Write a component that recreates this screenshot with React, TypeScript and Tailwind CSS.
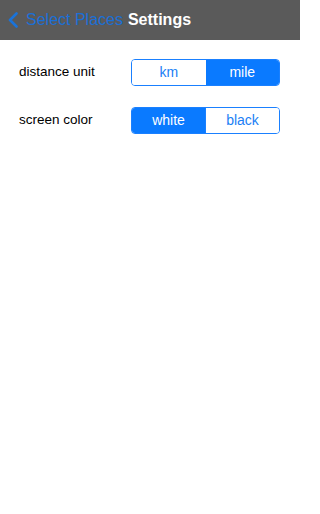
import { useState } from "react"

const SegmentRow = ({ label, options, selected, onPick }: { label: string; options: string[]; selected: number; onPick: (i: number) => void }) => {
    return (
        <div className="flex items-center h-[27px]">
            <div className="w-[131px] pl-[19px] text-[13.5px] text-black">{label}</div>
            <div className="flex w-[149px] h-[27px] rounded-[4px] border border-[#1a80ff] overflow-hidden">
                {options.map((o, i) => (
                    <div
                        key={o}
                        onClick={() => onPick(i)}
                        className={
                            i === selected
                                ? "flex-1 flex items-center justify-center bg-[#0a7aff] text-white text-[14px]"
                                : "flex-1 flex items-center justify-center bg-white text-[#1a80f5] text-[14px]" + (i > 0 ? " border-l border-[#1a80ff]" : "")
                        }
                    >
                        {o}
                    </div>
                ))}
            </div>
        </div>
    )
}

export default function App() {
    const [unit, setUnit] = useState(1)
    const [color, setColor] = useState(0)

    return (
        <div className="w-[300px] h-[514px] bg-white font-['Liberation_Sans',Arial,sans-serif] overflow-hidden">
            <div className="h-[40px] bg-[#5a5a5a] flex items-center pl-[8px]">
                <svg width="10" height="16" viewBox="0 0 10 16" className="mr-[8px]">
                    <path d="M8.5 1.5 L2 8 L8.5 14.5" fill="none" stroke="#1a73d9" strokeWidth="2.6" strokeLinecap="round" strokeLinejoin="round" />
                </svg>
                <span className="text-[16px] text-[#1a6fd6]">Select Places</span>
                <span className="text-[16px] text-white font-bold ml-[5px]">Settings</span>
            </div>
            <div className="flex flex-col gap-[21px] pt-[19px]">
                <SegmentRow label="distance unit" options={["km", "mile"]} selected={unit} onPick={setUnit} />
                <SegmentRow label="screen color" options={["white", "black"]} selected={color} onPick={setColor} />
            </div>
        </div>
    )
}
